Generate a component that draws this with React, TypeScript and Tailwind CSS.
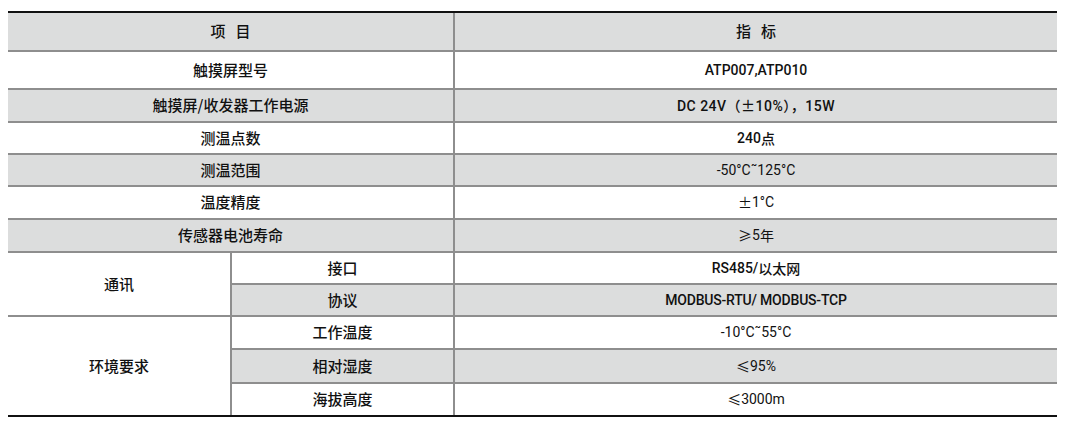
import React from "react";

const zh = { fontFamily: '"Noto Sans CJK SC", "Noto Sans", sans-serif' };
const val = { fontFamily: 'Roboto, "Noto Sans CJK SC", sans-serif' };

const line = "border-[#8e8e8e]";

function Label({ children, className = "" }: { children: React.ReactNode; className?: string }) {
  return (
    <div
      style={zh}
      className={`flex items-center justify-center text-[15px] font-medium text-[#111] ${line} ${className}`}
    >
      {children}
    </div>
  );
}

function Val({ children, className = "" }: { children: React.ReactNode; className?: string }) {
  return (
    <div
      style={val}
      className={`flex items-center justify-center text-[14px] font-medium text-[#111] ${line} ${className}`}
    >
      {children}
    </div>
  );
}

const Z = ({ children }: { children: React.ReactNode }) => <span style={zh}>{children}</span>;

export default function App() {
  const shade = "bg-[#dcdddd]";
  return (
    <div className="w-[1073px] h-[428px] bg-white pt-[11px] pl-[8px]">
      <div className="w-[1049px] border-t-2 border-b-2 border-[#111] grid grid-cols-[224px_223px_602px] grid-rows-[39px_38px_33px_32px_32px_33px_33px_32px_32px_33px_34px_31px]">
        {/* header */}
        <Label className={`col-span-2 border-b-2 border-r-2 ${shade} gap-[10px]`}>
          <span>项</span>
          <span>目</span>
        </Label>
        <Label className={`border-b-2 ${shade} gap-[10px]`}>
          <span>指</span>
          <span>标</span>
        </Label>

        <Label className="col-span-2 border-b-2 border-r-2">触摸屏型号</Label>
        <Val className="border-b-2">ATP007,ATP010</Val>

        <Label className={`col-span-2 border-b-2 border-r-2 ${shade}`}>触摸屏/收发器工作电源</Label>
        <Val className={`border-b-2 ${shade}`}>
          <span className="tracking-[0.5px]">
            DC 24V<Z>（±</Z>10%<Z>），</Z>15W
          </span>
        </Val>

        <Label className="col-span-2 border-b-2 border-r-2">测温点数</Label>
        <Val className="border-b-2">
          240<Z>点</Z>
        </Val>

        <Label className={`col-span-2 border-b-2 border-r-2 ${shade}`}>测温范围</Label>
        <Val className={`border-b-2 ${shade} font-normal`}>-50°C˜125°C</Val>

        <Label className="col-span-2 border-b-2 border-r-2">温度精度</Label>
        <Val className="border-b-2 font-normal">
          <Z>±</Z>1°C
        </Val>

        <Label className={`col-span-2 border-b-2 border-r-2 ${shade}`}>传感器电池寿命</Label>
        <Val className={`border-b-2 ${shade} font-normal`}>
          <Z>≥</Z>5<Z>年</Z>
        </Val>

        {/* 通讯 */}
        <Label className="row-span-2 border-b-2 border-r-2">通讯</Label>
        <Label className="border-b-2 border-r-2">接口</Label>
        <Val className="border-b-2">
          RS485/<Z>以太网</Z>
        </Val>
        <Label className={`border-b-2 border-r-2 ${shade}`}>协议</Label>
        <Val className={`border-b-2 ${shade}`}>
          <span className="tracking-[-0.2px]">MODBUS-RTU/ MODBUS-TCP</span>
        </Val>

        {/* 环境要求 */}
        <Label className="row-span-3 border-r-2">环境要求</Label>
        <Label className="border-b-2 border-r-2">工作温度</Label>
        <Val className="border-b-2 font-normal">-10°C˜55°C</Val>
        <Label className={`border-b-2 border-r-2 ${shade}`}>相对湿度</Label>
        <Val className={`border-b-2 ${shade} font-normal`}>
          <Z>≤</Z>95%
        </Val>
        <Label className="border-r-2">海拔高度</Label>
        <Val className="font-normal">
          <Z>≤</Z>3000m
        </Val>
      </div>
    </div>
  );
}
